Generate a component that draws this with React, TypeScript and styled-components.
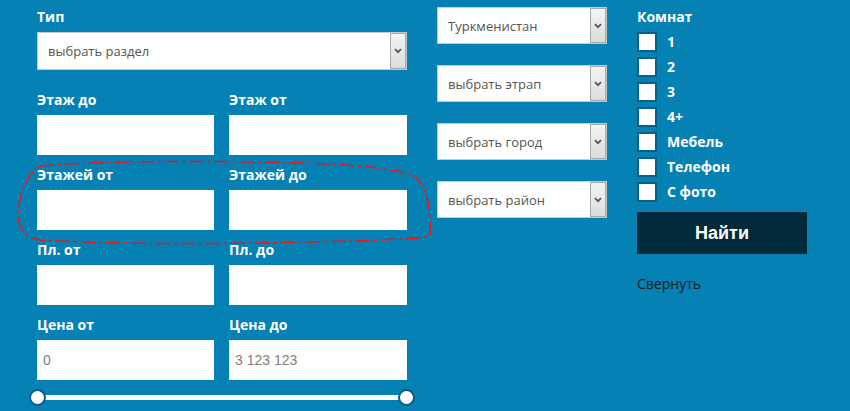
import React from "react";
import styled, { createGlobalStyle } from "styled-components";

const Global = createGlobalStyle`
  html, body { margin: 0; padding: 0; }
  body {
    background: #0581b4;
    width: 850px;
    height: 411px;
    overflow: hidden;
    font-family: "Open Sans", "DejaVu Sans", sans-serif;
  }
`;

const Page = styled.div`
  position: relative;
  width: 850px;
  height: 411px;
  background: #0581b4;
  display: flex;
  align-items: flex-start;
  padding-left: 37px;
  gap: 30px;
  box-sizing: border-box;
`;

const LeftCol = styled.div`
  width: 370px;
  padding-top: 7px;
  display: flex;
  flex-direction: column;
`;

const Label = styled.div`
  font-family: "Open Sans", sans-serif;
  font-weight: 700;
  font-size: 14px;
  line-height: 20px;
  height: 20px;
  color: #ffffff;
  margin-bottom: 5px;
`;

const SelectBox = styled.div<{ $w: number; $h: number }>`
  width: ${(p) => p.$w}px;
  height: ${(p) => p.$h}px;
  box-sizing: border-box;
  background: #ffffff;
  border: 1px solid #c8c8c8;
  display: flex;
  align-items: center;
  justify-content: space-between;
  padding-left: 10px;
  padding-right: 0;
  font-family: "Open Sans", sans-serif;
  font-size: 13px;
  color: #555555;
`;

const ArrowBtn = styled.div`
  width: 16px;
  align-self: stretch;
  margin: 0;
  box-sizing: border-box;
  border: 1px solid #a9a9a9;
  background: linear-gradient(#f4f4f4, #dcdcdc);
  display: flex;
  align-items: center;
  justify-content: center;
`;

const Grid = styled.div`
  margin-top: 20px;
  display: grid;
  grid-template-columns: 177px 178px;
  column-gap: 15px;
  row-gap: 10px;
`;

const Field = styled.div`
  display: flex;
  flex-direction: column;
`;

const Input = styled.div`
  height: 40px;
  background: #ffffff;
  display: flex;
  align-items: center;
  padding-left: 6px;
  font-family: "Liberation Sans", Arial, sans-serif;
  font-size: 14px;
  color: #808080;
`;

const SliderWrap = styled.div`
  position: relative;
  margin-top: 15px;
  height: 5px;
  width: 369px;
  background: #ffffff;
`;

const Handle = styled.div<{ $left: number }>`
  position: absolute;
  top: -6px;
  left: ${(p) => p.$left}px;
  width: 17px;
  height: 17px;
  box-sizing: border-box;
  border-radius: 50%;
  background: #ffffff;
  border: 2px solid #0a5e86;
`;

const MidCol = styled.div`
  width: 170px;
  padding-top: 7px;
  display: flex;
  flex-direction: column;
  gap: 21px;
`;

const RightCol = styled.div`
  width: 170px;
  padding-top: 7px;
  display: flex;
  flex-direction: column;
`;

const CheckList = styled.div`
  display: flex;
  flex-direction: column;
  gap: 5px;
`;

const CheckRow = styled.label`
  display: flex;
  align-items: center;
  height: 20px;
  line-height: 18px;
  gap: 10px;
  font-family: "Open Sans", sans-serif;
  font-weight: 700;
  font-size: 14px;
  color: #ffffff;
`;

const Box = styled.span`
  width: 20px;
  height: 20px;
  box-sizing: border-box;
  background: #ffffff;
  border: 2px solid #0a5f88;
`;

const FindButton = styled.button`
  margin-top: 10px;
  width: 170px;
  height: 42px;
  border: none;
  background: #022a3b;
  color: #ffffff;
  font-family: "Liberation Sans", Arial, sans-serif;
  font-weight: 700;
  font-size: 18px;
  cursor: pointer;
`;

const Collapse = styled.div`
  margin-top: 20px;
  font-family: "Open Sans", sans-serif;
  font-size: 14px;
  line-height: 20px;
  color: #0d1a22;
`;

const Annotation = styled.svg`
  position: absolute;
  left: 0;
  top: 0;
  pointer-events: none;
`;

const Chevron = () => (
  <svg width="8" height="6" viewBox="0 0 8 6">
    <path d="M1 1.2 L4 4.2 L7 1.2" fill="none" stroke="#555" strokeWidth="1.8" />
  </svg>
);

const Select = ({ text, w, h }: { text: string; w: number; h: number }) => (
  <SelectBox $w={w} $h={h}>
    <span>{text}</span>
    <ArrowBtn>
      <Chevron />
    </ArrowBtn>
  </SelectBox>
);

const fields: [string, string][] = [
  ["Этаж до", "Этаж от"],
  ["Этажей от", "Этажей до"],
  ["Пл. от", "Пл. до"],
];

export default function App() {
  return (
    <>
      <Global />
      <Page>
        <LeftCol>
          <Label>Тип</Label>
          <Select text="выбрать раздел" w={370} h={38} />
          <Grid>
            {fields.map(([a, b]) => (
              <React.Fragment key={a}>
                <Field>
                  <Label>{a}</Label>
                  <Input />
                </Field>
                <Field>
                  <Label>{b}</Label>
                  <Input />
                </Field>
              </React.Fragment>
            ))}
            <Field>
              <Label>Цена от</Label>
              <Input>0</Input>
            </Field>
            <Field>
              <Label>Цена до</Label>
              <Input>3 123 123</Input>
            </Field>
          </Grid>
          <SliderWrap>
            <Handle $left={-8} />
            <Handle $left={361} />
          </SliderWrap>
        </LeftCol>
        <MidCol>
          <Select text="Туркменистан" w={170} h={37} />
          <Select text="выбрать этрап" w={170} h={37} />
          <Select text="выбрать город" w={170} h={37} />
          <Select text="выбрать район" w={170} h={37} />
        </MidCol>
        <RightCol>
          <Label>Комнат</Label>
          <CheckList>
            {["1", "2", "3", "4+", "Мебель", "Телефон", "С фото"].map((t) => (
              <CheckRow key={t}>
                <Box />
                {t}
              </CheckRow>
            ))}
          </CheckList>
          <FindButton>Найти</FindButton>
          <Collapse>Свернуть</Collapse>
        </RightCol>
        <Annotation width="850" height="411" viewBox="0 0 850 411">
          <path
            d="M40 166 Q110 160 250 162 Q385 163 415 176 Q432 192 430 236 Q420 240 300 242 Q150 246 40 240 Q18 236 18 214 Q20 180 40 166 Z"
            fill="none"
            stroke="#ff1010"
            strokeWidth="1.5"
            strokeDasharray="14 4 3 4"
          />
        </Annotation>
      </Page>
    </>
  );
}
